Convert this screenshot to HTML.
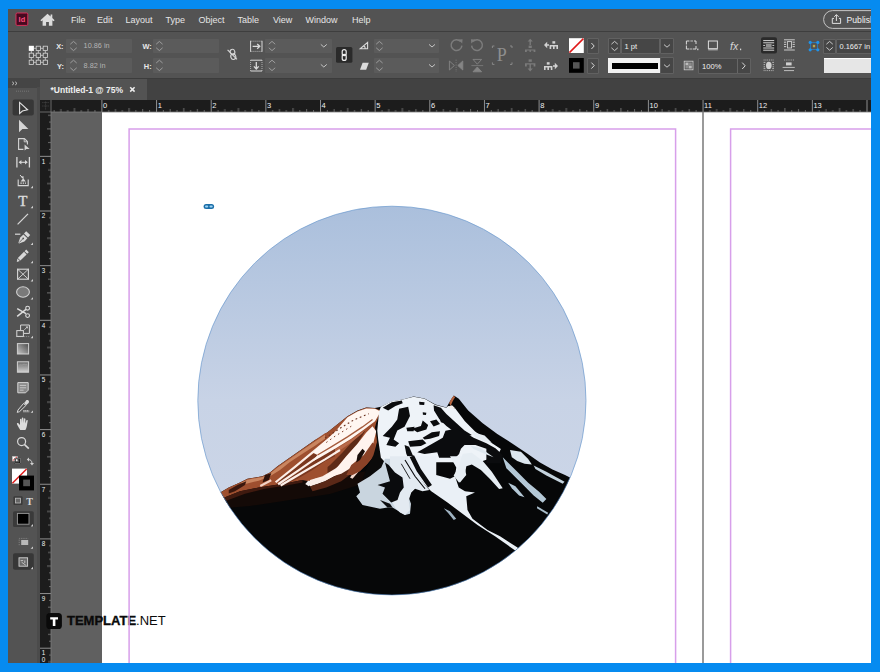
<!DOCTYPE html>
<html lang="en">
<head>
<meta charset="utf-8">
<title>Untitled-1 @ 75% - InDesign</title>
<style>
html,body{margin:0;padding:0;}
body{width:880px;height:672px;overflow:hidden;background:#068bf0;font-family:"Liberation Sans",sans-serif;position:relative;}
#app{position:absolute;left:8px;top:9px;width:863px;height:654px;background:#535353;overflow:hidden;}
.abs{position:absolute;}
#menubar{left:0;top:0;width:863px;height:22px;background:#535353;}
#menusep{left:0;top:22px;width:863px;height:1px;background:#3e3e3e;}
#control{left:0;top:23px;width:863px;height:46px;background:#535353;}
#tabbar{left:0;top:69px;width:863px;height:22px;background:#424242;}
#tab{left:32px;top:70px;width:107px;height:21px;background:#535353;}
#toolhead{left:0;top:69px;width:32px;height:10px;background:#454545;}
#tools{left:0;top:79px;width:29px;height:576px;background:#535353;}
#toolsep{left:29px;top:78px;width:3px;height:576px;background:#4b4b4b;}
#hruler{left:32px;top:91px;width:831px;height:12px;background:#1c1c1c;}
#vruler{left:32px;top:103px;width:11px;height:551px;background:#1c1c1c;}
#paste{left:43px;top:103px;width:51px;height:551px;background:#606060;}
#page1{left:94px;top:103px;width:601px;height:551px;background:#fff;}
#page2{left:696px;top:103px;width:167px;height:551px;background:#fff;}
#pagesep{left:694.4px;top:103px;width:1.6px;height:551px;background:#9a9a9a;}
.menu{position:absolute;top:6.4px;font-size:9px;line-height:11px;color:#e6e6e6;white-space:nowrap;}
.lbl{position:absolute;font-size:7.4px;line-height:9px;color:#e8e8e8;font-weight:bold;white-space:nowrap;}
.val{position:absolute;font-size:7.3px;line-height:9px;color:#b4b4b4;white-space:nowrap;}
.valw{position:absolute;font-size:7.6px;line-height:9px;color:#f0f0f0;white-space:nowrap;}
.fld{position:absolute;background:#5b5b5b;border-radius:1px;}
.dfld{position:absolute;background:#464646;box-shadow:0 0 0 0.6px #6a6a6a;}
#tabtxt{left:42.5px;top:76px;font-size:8.5px;line-height:11px;font-weight:bold;color:#f0f0f0;white-space:nowrap;}
#wm{left:59px;top:603.6px;font-size:13px;line-height:16px;color:#0a0a0a;white-space:nowrap;}
#wm b{-webkit-text-stroke:0.35px #0a0a0a;}
#wm b{letter-spacing:0;}
#art{position:absolute;left:0;top:0;width:880px;height:672px;pointer-events:none;}
</style>
</head>
<body>
<div id="app">
  <div class="abs" id="menubar"></div>
  <div class="abs" id="menusep"></div>
  <div class="abs" id="control"></div>
  <div class="abs" id="tabbar"></div>
  <div class="abs" id="tab"></div>
  <div class="abs" style="left:0;top:68.6px;width:863px;height:1px;background:#3c3c3c"></div>
  <div class="abs" id="toolhead"></div>
  <div class="abs" id="tools"></div>
  <div class="abs" id="toolsep"></div>
  <div class="abs" id="hruler"></div>
  <div class="abs" id="vruler"></div>
  <div class="abs" id="paste"></div>
  <div class="abs" id="page1"></div>
  <div class="abs" id="page2"></div>
  <div class="abs" id="pagesep"></div>

  <!-- menu -->
  <span class="menu" style="left:63px">File</span>
  <span class="menu" style="left:89px">Edit</span>
  <span class="menu" style="left:117.4px">Layout</span>
  <span class="menu" style="left:157.4px">Type</span>
  <span class="menu" style="left:190.4px">Object</span>
  <span class="menu" style="left:229.4px">Table</span>
  <span class="menu" style="left:265px">View</span>
  <span class="menu" style="left:297.4px">Window</span>
  <span class="menu" style="left:344px">Help</span>
  <span class="menu" style="left:838.6px;color:#f2f2f2;font-size:8.6px">Publish</span>

  <!-- control panel fields -->
  <div class="fld" style="left:58px;top:30.4px;width:66px;height:13.6px"></div>
  <div class="fld" style="left:58px;top:48.6px;width:66px;height:15.4px"></div>
  <div class="fld" style="left:145px;top:30.4px;width:65.6px;height:13.6px"></div>
  <div class="fld" style="left:145px;top:48.6px;width:65.6px;height:15.4px"></div>
  <div class="fld" style="left:257px;top:30.4px;width:67px;height:13.6px"></div>
  <div class="fld" style="left:257px;top:48.6px;width:67px;height:15.4px"></div>
  <div class="fld" style="left:365.6px;top:30.4px;width:65.8px;height:13.6px"></div>
  <div class="fld" style="left:365.6px;top:48.6px;width:65.8px;height:15.4px"></div>

  <span class="lbl" style="left:48.2px;top:32.6px">X:</span>
  <span class="lbl" style="left:49px;top:52.6px">Y:</span>
  <span class="lbl" style="left:134.4px;top:32.6px">W:</span>
  <span class="lbl" style="left:135.8px;top:52.6px">H:</span>
  <span class="val" style="left:75.6px;top:32.4px">10.86 in</span>
  <span class="val" style="left:75.6px;top:52.4px">8.82 in</span>

  <!-- stroke weight -->
  <div class="dfld" style="left:601px;top:30px;width:11px;height:14px"></div>
  <div class="dfld" style="left:614.4px;top:30px;width:36.2px;height:14px"></div>
  <div class="dfld" style="left:653px;top:30px;width:12px;height:14px"></div>
  <span class="valw" style="left:616.4px;top:32.6px">1 pt</span>
  <div class="abs" style="left:600px;top:49px;width:52px;height:15px;background:#f2f2f2"></div>
  <div class="abs" style="left:603.6px;top:53.8px;width:46px;height:5.8px;background:#000"></div>
  <div class="dfld" style="left:653px;top:49.4px;width:12px;height:14.4px"></div>
  <!-- opacity -->
  <div class="dfld" style="left:691px;top:49.6px;width:38px;height:14.2px"></div>
  <div class="dfld" style="left:729.6px;top:49.6px;width:12.4px;height:14.2px"></div>
  <span class="valw" style="left:694px;top:52.6px">100%</span>
  <!-- swatch buttons -->
  <div class="dfld" style="left:579.6px;top:30px;width:10.4px;height:14px;background:#4a4a4a"></div>
  <div class="dfld" style="left:579.6px;top:49.6px;width:10.4px;height:14px;background:#4a4a4a"></div>
  <!-- far right -->
  <div class="dfld" style="left:816px;top:30.6px;width:11.4px;height:13px"></div>
  <div class="dfld" style="left:829px;top:30.6px;width:36px;height:13px"></div>
  <span class="valw" style="left:831.6px;top:32.6px;font-size:7.4px">0.1667 in</span>
  <div class="abs" style="left:815.6px;top:49px;width:50px;height:15px;background:#e6e6e6;border-top:1px solid #fff;box-sizing:border-box"></div>

  <span class="abs" id="tabtxt">*Untitled-1 @ 75%</span>
  <span class="abs" id="wm"><b>TEMPLATE</b>.NET</span>
</div>

<svg id="art" width="880" height="672" viewBox="0 0 880 672">
<defs>
  <linearGradient id="sky" x1="0" y1="0" x2="0" y2="1">
    <stop offset="0" stop-color="#aabfdc"/>
    <stop offset="0.25" stop-color="#b9c9e1"/>
    <stop offset="0.5" stop-color="#c8d3e6"/>
    <stop offset="1" stop-color="#cfd8e8"/>
  </linearGradient>
  <clipPath id="appclip"><rect x="8" y="9" width="863" height="654"/></clipPath>
  <clipPath id="circ"><ellipse cx="391.9" cy="400.6" rx="194.1" ry="194.4"/></clipPath>
  <pattern id="hticks" patternUnits="userSpaceOnUse" x="101.4" y="100" width="54.65" height="12">
    <rect x="0" y="0" width="1" height="12" fill="#8e8e8e"/>
    <rect x="6.84" y="10" width="0.8" height="2" fill="#7c7c7c"/>
    <rect x="13.67" y="9" width="0.8" height="3" fill="#7c7c7c"/>
    <rect x="20.5" y="10" width="0.8" height="2" fill="#7c7c7c"/>
    <rect x="27.34" y="8" width="0.8" height="4" fill="#868686"/>
    <rect x="34.17" y="10" width="0.8" height="2" fill="#7c7c7c"/>
    <rect x="41" y="9" width="0.8" height="3" fill="#7c7c7c"/>
    <rect x="47.85" y="10" width="0.8" height="2" fill="#7c7c7c"/>
  </pattern>
  <pattern id="vticks" patternUnits="userSpaceOnUse" x="40" y="101.2" width="11" height="54.65">
    <rect x="0" y="0" width="11" height="1" fill="#8e8e8e"/>
    <rect x="9" y="6.84" width="2" height="0.8" fill="#7c7c7c"/>
    <rect x="8" y="13.67" width="3" height="0.8" fill="#7c7c7c"/>
    <rect x="9" y="20.5" width="2" height="0.8" fill="#7c7c7c"/>
    <rect x="7" y="27.34" width="4" height="0.8" fill="#868686"/>
    <rect x="9" y="34.17" width="2" height="0.8" fill="#7c7c7c"/>
    <rect x="8" y="41" width="3" height="0.8" fill="#7c7c7c"/>
    <rect x="9" y="47.85" width="2" height="0.8" fill="#7c7c7c"/>
  </pattern>
</defs>

<!-- rulers -->
<g id="rulers">
  <rect x="51" y="100" width="820" height="12" fill="url(#hticks)"/>
  <rect x="40" y="112" width="11" height="551" fill="url(#vticks)"/>
  <rect x="40" y="111.6" width="831" height="0.8" fill="#7d7d7d"/>
  <rect x="50.6" y="100" width="0.8" height="563" fill="#7d7d7d"/>
  <g font-family="Liberation Sans, sans-serif" font-size="7.5" fill="#efefef">
    <text x="103.0" y="107.6">0</text><text x="157.7" y="107.6">1</text><text x="212.3" y="107.6">2</text><text x="267.0" y="107.6">3</text><text x="321.6" y="107.6">4</text><text x="376.2" y="107.6">5</text><text x="430.9" y="107.6">6</text><text x="485.6" y="107.6">7</text><text x="540.2" y="107.6">8</text><text x="594.9" y="107.6">9</text><text x="649.5" y="107.6">10</text><text x="704.1" y="107.6">11</text><text x="758.8" y="107.6">12</text><text x="813.4" y="107.6">13</text>
  </g>
  <g font-family="Liberation Sans, sans-serif" font-size="7" fill="#efefef">
    <text transform="translate(41.8,163.8) scale(0.9,1)">1</text><text transform="translate(41.8,218.4) scale(0.9,1)">2</text><text transform="translate(41.8,273.0) scale(0.9,1)">3</text><text transform="translate(41.8,327.7) scale(0.9,1)">4</text><text transform="translate(41.8,382.3) scale(0.9,1)">5</text><text transform="translate(41.8,437.0) scale(0.9,1)">6</text><text transform="translate(41.8,491.6) scale(0.9,1)">7</text><text transform="translate(41.8,546.3) scale(0.9,1)">8</text><text transform="translate(41.8,600.9) scale(0.9,1)">9</text><text transform="translate(41.8,655.4) scale(0.9,1)">1</text><text transform="translate(41.8,661.6) scale(0.9,1)">0</text>
  </g>
</g>

<!-- page margins -->
<g id="margins" fill="none" stroke="#d79fea" stroke-width="1.5">
  <path d="M129.1 663V129.1H675.6V663"/>
  <path d="M730.6 663V129.1H871"/>
</g>

<!-- artwork -->
<g id="artwork">
  <g clip-path="url(#circ)">
    <rect x="195" y="203" width="395" height="395" fill="url(#sky)"/>
    <g id="mountain">
  <!-- base silhouette -->
  <path fill="#060708" d="M190 600V494L221 491.9L228.8 487.5L240 482.5L247.5 478.8L262.5 476.3L270 472.5L277.5 466.3L290 457.5L302.5 448.8L315 440L322.5 436.3L335 426.3L347.5 416.3L357.5 410.6L366.3 407.5L375 408L380.9 406.8L391.8 401.4L402.7 399.5L413.6 396.6L424.5 398.4L435.5 404.6L446.4 407.5L450 401.3L453.8 395.6L458.8 398.8L468.2 410.5L482.7 423.2L497.3 434.1L511.8 443.2L527.5 453.8L540 462.5L552.5 469.4L565 475L570 477.5L600 480V600Z"/>
  <!-- warm dark tint on lower-left -->
  <path fill="#140a07" d="M215 496L240 490L275 485L302 480L325 481L352 474L372 470L362 484L330 494L290 500L250 506L226 508Z"/>
  <!-- tile B (brown base): origin 310,390 scale 8 -->
  <g transform="translate(310,390) scale(0.125)">
    <path fill="#9e4f2f" d="M-10 450L100 370L200 290L300 210L380 165L450 140L520 145L570 165L530 260L520 300L540 400L520 520L450 600L340 680L-10 680Z"/>
    <path fill="#5e2a17" d="M440 330L380 430L290 530L200 640L140 680L60 680L160 600L260 500L350 400L420 330Z"/>
    <path fill="#b8694a" d="M-10 600L80 545L200 475L330 395L440 315L420 345L330 420L200 510L80 590L-10 640Z"/>
  </g>
  <!-- tile A: origin 215,420 scale 8 -->
  <g transform="translate(215,420) scale(0.125)">
    <path fill="#9e4f2f" d="M30 590L50 575L110 540L200 500L260 470L380 450L440 420L500 370L600 300L700 230L800 160L880 105L900 100V480L800 500L700 480L600 500L480 520L350 540L200 570L60 625Z"/>
    <path fill="#c98560" d="M200 505L260 478L380 455L440 428L500 380L600 310L700 240L800 172L880 118V150L800 205L700 270L600 335L520 400L440 450L350 485L250 510Z"/>
    <path fill="#7a371f" d="M520 470L620 400L760 290L880 200L960 150V290L880 330L780 400L660 470L560 515L500 520Z"/>
    <path fill="#3a170d" d="M110 560L180 520L250 490L240 520L160 570L110 588Z"/>
    <path fill="#2e120a" d="M400 440L450 425L430 480L380 500Z"/>
    <path fill="#401a0f" d="M60 625L200 570L350 540L480 520L600 500L700 480L700 500L560 525L400 550L240 590L90 645Z"/>
    <g fill="none" stroke="#fbeee8" stroke-width="17">
      <path d="M485 498L640 375L870 185L990 95"/>
      <path d="M505 514L680 395L880 255L1000 170"/>
      <path d="M525 524L700 420L880 315L1000 240"/>
    </g>
    <path fill="none" stroke="#f2d3c6" stroke-width="16" d="M362 528L450 482"/>
    <path fill="#f5f1f0" d="M722 512L745 485L790 488L800 470L845 468L862 490L820 512L770 516L750 530Z"/>
  </g>
  <!-- tile C: origin 310,460 scale 8 (continuations) -->
  <g transform="translate(310,460) scale(0.125)">
    <path fill="#fbeee8" d="M0 160L100 130L200 70L300 0L370 0L250 100L120 170L0 212Z"/>
    <path fill="#f3d9cf" d="M320 140L390 40L430 0L470 0L400 80L340 150Z"/>
    <path fill="#5a2817" d="M0 212L120 170L250 100L330 30L330 110L250 170L130 220L20 250Z"/>
  </g>
  <!-- tile B (snow): origin 310,390 scale 8 -->
  <g transform="translate(310,390) scale(0.125)">
    <path fill="#fff6f1" d="M300 217L380 172L450 147L520 150L565 172L520 250L440 310L330 390L200 470L80 540L20 572L60 520L20 500L100 425L200 333Z"/>
    <path fill="#fff3ee" d="M500 290L530 330L505 430L440 530L350 610L250 670L150 700L120 690L200 640L290 530L380 430L450 340Z"/>
    <path fill="#8a4228" d="M500 420L522 440L512 520L450 600L400 650L340 680L290 680L330 600L430 520Z"/>
    <path fill="#1a0d0a" d="M420 470L440 490L400 560L370 580L380 520Z"/>
    <path fill="none" stroke="#a55a3b" stroke-width="10" d="M60 520L170 455L300 375L420 295L500 235"/>
    <path fill="none" stroke="#6a3220" stroke-width="9" stroke-dasharray="14 22" d="M120 385L250 300L350 240L470 190"/>
    <path fill="none" stroke="#7a3a24" stroke-width="8" stroke-dasharray="12 26" d="M130 420L200 370L330 290"/>
  </g>
  <!-- dark wedge between sunlit and shaded -->
  <path fill="#0b0a0a" d="M375.6 426L378 430L378.5 440L381.3 452.5L385 463L381 470L372 476L362 480L366 470L373.5 455L377 442Z"/>

  <!-- upper snowfield view: origin 370,385 scale 5.5 -->
  <g transform="translate(370,385) scale(0.181818)">
    <path fill="#eef3f8" d="M50 145L60 120L120 90L180 80L240 65L300 75L360 110L420 125L430 115L470 130L522 200L578 256L646 304L720 352L700 390L600 425L520 425L470 425L300 425L83 425L60 400L45 300L40 250Z"/>
    <g fill="#0b0c0e">
      <path d="M70 125L120 95L175 85L180 100L140 115L100 140Z"/>
      <path d="M160 130L210 120L220 170L190 230L150 250L130 300L160 320L140 340L90 330L110 290L70 280L120 230L150 190Z"/>
      <path d="M270 92L300 95L298 110L272 108Z"/>
      <path d="M200 235L245 230L240 255L205 255Z"/>
      <path d="M230 240L280 225L290 195L320 220L310 245L260 260Z"/>
      <path d="M290 150L310 152L308 165L291 163Z"/>
      <path d="M330 200L365 190L385 215L350 228Z"/>
      <path d="M375 165L410 160L440 195L420 215L390 205Z"/>
      <path d="M350 112L390 125L420 160L470 205L520 250L560 275L530 285L470 262L420 225L380 185L352 140Z"/>
      <path d="M290 290L340 260L385 255L380 280L330 295L300 300Z"/>
      <path d="M210 310L290 300L310 320L280 335L220 340Z"/>
      <path d="M260 370L330 330L400 290L415 252L470 240L520 260L570 290L640 320L690 348L730 385L720 430L640 430L640 350L580 330L520 330L500 350L490 380L470 400L380 400L370 370L300 380Z"/>
      <path d="M380 400L470 400L480 440L300 440Z" opacity="0"/>
      <path d="M190 330L215 340L250 420L253 430L225 430L200 380Z"/>
      <path d="M20 250L42 300L62 400L85 430L0 430L0 400L20 380L10 300Z" opacity="0"/>
    </g>
  </g>
  <!-- ridge (dark) right of pinnacle: keep base. pinnacle warm highlight -->
  <path fill="#b4633f" d="M449.2 403L451.5 398.6L453.6 395.8L455.2 397L452.8 401L450.6 406Z"/>
  <path fill="#f4efec" d="M447.5 406.8L452 405.2L455.5 408.6L450 408.6Z"/>

  <!-- tile D: origin 310,460 scale 8 : lower-left snow patch -->
  <g transform="translate(310,460) scale(0.125)">
    <path fill="#c9d5df" d="M600 -10L570 60L480 130L380 190L400 260L370 290L420 360L560 390L620 380L660 380L760 440L800 430L808 350L790 300L810 250L780 200L720 100L690 -10Z"/>
  </g>
  <!-- tile E: origin 400,460 scale 8 : chute etc -->
  <g transform="translate(400,460) scale(0.125)">
    <path fill="#e3eaf1" d="M-80 -30L70 -30L110 60L200 200L235 240L180 250L120 230L90 260L70 320L80 400L40 440L0 420L-40 380L-80 300Z"/>
    <path fill="#eaf0f6" d="M60 -30L130 -30L290 -30L290 120L400 150L440 130L470 220L520 250L600 260L530 290L540 400L580 470L700 560L800 610L940 700L960 730L930 730L760 610L620 520L500 430L380 340L250 250L200 200L100 60Z"/>
    <path fill="#eaf0f6" d="M400 -30L500 -30L530 120L480 180L440 130L450 60Z"/>
    <g fill="none" stroke="#0a0b0d">
      <path stroke-width="38" d="M95 -30L150 80L240 210"/>
      <path stroke-width="9" d="M40 0L120 130L200 230"/>
      <path stroke-width="7" d="M10 30L80 150"/>
    </g>
    <path fill="#9fb3c2" d="M350 385L400 410L450 470L430 480L390 430Z"/>
  </g>
  <g transform="translate(310,460) scale(0.125)">
    <path fill="#0a0b0d" d="M600 20L640 170L540 200L600 220L580 270L650 340L700 320L720 260L750 220L740 140L680 100L630 40Z"/>
    <path fill="#0a0b0d" d="M560 320L640 350L660 380L620 380Z"/>
  </g>
  <!-- right view: origin 430,430 scale 5.5 -->
  <g transform="translate(430,430) scale(0.181818)">
    <path fill="#e6edf3" d="M180 130L230 125L290 170L340 230L400 320L380 325L330 270L280 220L230 190L200 200L190 250L160 290L130 250L160 200L170 160Z"/>
    <path fill="#e6edf3" d="M230 10L300 30L340 70L300 60L250 40Z"/>
    <path fill="#dfe8ef" d="M220 85L280 100L350 150L300 130L240 105Z"/>
    <path fill="#dce6ee" d="M440 110L500 120L540 160L560 190L520 185L480 170L450 150Z"/>
    <path fill="#b4c8d6" d="M400 150L430 180L480 230L540 290L600 340L640 380L620 400L570 360L520 310L470 260L420 210Z"/>
    <path fill="#c4d3de" d="M570 195L640 230L740 285L730 295L640 250L580 215Z"/>
    <path fill="#b4c8d6" d="M430 290L470 310L520 370L490 360L450 320Z"/>
    <path fill="#a9bdcb" d="M590 420L650 455L645 465L588 430Z"/>
    <path fill="#dfe8ef" d="M0 40L60 20L120 40L180 60L150 80L90 70L40 70L0 80Z" opacity="0"/>
  </g>
</g>
  </g>
  <ellipse cx="391.9" cy="400.6" rx="194.1" ry="194.4" fill="none" stroke="#5b8fc9" stroke-width="0.6"/>
  <rect x="203.6" y="204.1" width="10.5" height="5" rx="2.5" fill="#1b6ea8"/>
  <rect x="205" y="205.6" width="3.2" height="2" rx="1" fill="#9fd4f5"/><rect x="209.5" y="205.6" width="3.2" height="2" rx="1" fill="#9fd4f5"/>
</g>

<!-- watermark logo -->
<g id="wmlogo">
  <rect x="46.3" y="613" width="15.6" height="16" rx="3.6" fill="#0a0a0a"/>
  <path d="M50.2 617.2h7.8v2.3h-2.6v6.4h-2.6v-6.4h-2.6z" fill="#fff"/>
</g>

<g id="topicons" clip-path="url(#appclip)">
  <!-- Id logo -->
  <rect x="16" y="13" width="11.8" height="12.4" rx="1.2" fill="#470a20" stroke="#e6305f" stroke-width="0.9"/>
  <text x="21.9" y="22.4" text-anchor="middle" font-family="Liberation Sans, sans-serif" font-weight="bold" font-size="7.4" fill="#ff4f80">Id</text>
  <!-- home -->
  <path fill="#dcdcdc" d="M47.5 13.7L40.4 20.2L41.5 21.3L42.6 20.3V25.7H46.1V21.9H48.9V25.7H52.4V20.3L53.5 21.3L54.6 20.2L52.3 18.1V14.6H50.6V16.5Z"/>
  <!-- publish pill -->
  <rect x="823.6" y="10.6" width="62" height="17.8" rx="8.9" fill="none" stroke="#c4c4c4" stroke-width="1"/>
  <g fill="none" stroke="#e0e0e0" stroke-width="1">
    <path d="M834 18.4H832.3V23.4H840.6V18.4H838.9"/>
    <path d="M836.4 21V14.8M834.2 16.8L836.4 14.6L838.6 16.8"/>
  </g>
  <!-- reference point grid -->
  <g fill="none" stroke="#d6d6d6" stroke-width="0.8">
    <path d="M33.7 48.3H36M40.7 48.3H43M33.7 55.3H36M40.7 55.3H43M33.7 62.3H36M40.7 62.3H43M31.3 50.7V53M31.3 57.7V60M38.3 50.7V53M38.3 57.7V60M45.3 50.7V53M45.3 57.7V60"/>
    <rect x="36.2" y="46.2" width="4.3" height="4.3"/><rect x="43.2" y="46.2" width="4.3" height="4.3"/>
    <rect x="29.2" y="53.2" width="4.3" height="4.3"/><rect x="36.2" y="53.2" width="4.3" height="4.3"/><rect x="43.2" y="53.2" width="4.3" height="4.3"/>
    <rect x="29.2" y="60.2" width="4.3" height="4.3"/><rect x="36.2" y="60.2" width="4.3" height="4.3"/><rect x="43.2" y="60.2" width="4.3" height="4.3"/>
  </g>
  <rect x="28.8" y="45.8" width="5.1" height="5.1" fill="#fff"/>
  <!-- spinner chevrons (dim) -->
  <g fill="none" stroke="#a4a4a4" stroke-width="0.9">
    <path d="M70.3 44.2L73.5 41.4L76.7 44.2M70.3 47.8L73.5 50.6L76.7 47.8M70.3 63L73.5 60.2L76.7 63M70.3 67.8L73.5 70.6L76.7 67.8"/>
    <path d="M156.2 44.2L159.4 41.4L162.6 44.2M156.2 47.8L159.4 50.6L162.6 47.8M156.2 63L159.4 60.2L162.6 63M156.2 67.8L159.4 70.6L162.6 67.8"/>
    <path d="M268.8 44.2L272 41.4L275.2 44.2M268.8 47.8L272 50.6L275.2 47.8M268.8 63L272 60.2L275.2 63M268.8 67.8L272 70.6L275.2 67.8"/>
    <path d="M376.2 44.2L379.4 41.4L382.6 44.2M376.2 47.8L379.4 50.6L382.6 47.8M376.2 63L379.4 60.2L382.6 63M376.2 67.8L379.4 70.6L382.6 67.8"/>
  </g>
  <!-- dropdown chevrons -->
  <g fill="none" stroke="#cfcfcf" stroke-width="0.9">
    <path d="M320.8 44.4L323.8 47L326.8 44.4M320.8 64.4L323.8 67L326.8 64.4"/>
    <path d="M429 44.4L432 47L435 44.4M429 64.4L432 67L435 64.4"/>
  </g>
  <!-- broken chain -->
  <g fill="none" stroke="#d8d8d8" stroke-width="1.1">
    <ellipse cx="232.5" cy="51.9" rx="2.3" ry="2.6" transform="rotate(-20 232.5 51.9)"/>
    <ellipse cx="233.3" cy="56.7" rx="2.5" ry="2.8" transform="rotate(-20 233.3 56.7)"/>
    <path d="M227.6 49.8L237 59.4"/>
  </g>
  <!-- scale X / Y icons -->
  <g fill="none" stroke="#dadada" stroke-width="1">
    <path d="M250.6 40.8V51.8M262 40.8V51.8" />
    <path d="M250.6 41.2H262M250.6 51.4H262" stroke-dasharray="1 1" stroke-width="0.7"/>
    <path d="M252.6 46.3H259.4M257.2 43.9L259.8 46.3L257.2 48.7" stroke-width="1.3"/>
    <path d="M250.6 60V71M262 60V71" stroke-dasharray="1 1" stroke-width="0.7"/>
    <path d="M250.6 60.2H262M250.6 71H262"/>
    <path d="M256.3 62V68.6M253.9 66.4L256.3 69L258.7 66.4" stroke-width="1.3"/>
  </g>
  <!-- constrain link button -->
  <rect x="336" y="47" width="16.4" height="15.8" rx="1.6" fill="#2a2a2a"/>
  <g fill="none" stroke="#ececec" stroke-width="1.2">
    <rect x="342.2" y="49.6" width="4" height="6" rx="2"/>
    <rect x="342.2" y="54.4" width="4" height="6" rx="2"/>
  </g>
  <!-- rotation angle / shear -->
  <path fill="none" stroke="#dcdcdc" stroke-width="1.1" d="M367.6 42.4L360.2 48.8H367.6ZM364 45.6C364.8 46.4 365.2 47.4 365.2 48.6"/>
  <path fill="#dcdcdc" d="M362.6 62.8H368.8L366.2 69.8H360Z"/>
  <!-- rotate cw / ccw (dim) -->
  <g fill="none" stroke="#7c7c7c" stroke-width="1.5">
    <path d="M460.6 41.6A5.4 5.4 0 1 0 461.9 45.6"/>
    <path d="M472.9 41.6A5.4 5.4 0 1 1 471.6 45.6"/>
  </g>
  <path fill="#7c7c7c" d="M458.2 39.4L462.6 39.2L462.2 43.6ZM475.3 39.4L470.9 39.2L471.3 43.6Z"/>
  <!-- flip h / flip v (dim) -->
  <g stroke="#858585" stroke-width="0.9">
    <path fill="none" d="M449.4 61V70L454.4 65.5Z"/>
    <path fill="#858585" d="M462.8 61V70L457.8 65.5Z"/>
    <path fill="none" d="M456.1 59.6V72" stroke-dasharray="1.2 1.2" stroke-width="0.7"/>
    <path fill="none" d="M473 59.4H481.6L477.3 64.2Z"/>
    <path fill="#858585" d="M473 71.8H481.6L477.3 67Z"/>
    <path fill="none" d="M471.4 65.6H483.2" stroke-width="0.7"/>
  </g>
  <!-- P icon -->
  <text x="501.8" y="60.7" text-anchor="middle" font-family="Liberation Serif, serif" font-size="18" fill="#8e8e8e">P</text>
  <g fill="none" stroke="#8e8e8e" stroke-width="0.9">
    <path d="M492.4 48V46H494.4M510 46H512V48M492.4 62.4V64.4H494.4M510 64.4H512V62.4"/>
  </g>
  <!-- select container / content (dim) -->
  <g fill="#7b7b7b">
    <path d="M530.2 38.8L527.6 41.6H529.5V45H530.9V41.6H532.8Z"/>
    <rect x="528.6" y="45.6" width="3.2" height="2.4"/>
    <path d="M525 52V49.4H535.4V52H533.6V50.6H530.9V52H529.5V50.6H526.8V52Z"/>
    <rect x="528.6" y="59.4" width="3.2" height="2.4"/>
    <path d="M525 66.4V63.2H535.4V66.4H533.6V64.6H530.9V68.4H532.8L530.2 71.6L527.6 68.4H529.5V64.6H526.8V66.4Z"/>
  </g>
  <!-- select previous / next object -->
  <g fill="#d2d2d2">
    <path d="M544 45L547.2 41.8V44.2H549V45.8H547.2V48.2Z"/>
    <rect x="552.4" y="41.2" width="2.8" height="2.4"/>
    <path d="M549.6 49V45H558V49H556.4V46.4H554.6V49H553V46.4H551.2V49Z"/>
    <path d="M558 66L554.8 62.8V65.2H553V66.8H554.8V69.2Z"/>
    <rect x="546.8" y="62.2" width="2.8" height="2.4"/>
    <path d="M544 70V66H552.4V70H550.8V67.4H549V70H547.4V67.4H545.6V70Z"/>
  </g>
  <!-- fill / stroke swatches -->
  <rect x="569" y="38.2" width="14.8" height="14.8" fill="#fff"/>
  <path d="M569.4 52.6L583.4 38.6" stroke="#e01919" stroke-width="1.5" fill="none"/>
  <rect x="569" y="58" width="14.8" height="14.8" fill="#000"/>
  <rect x="573" y="62.2" width="6.6" height="6.4" fill="#555"/>
  <g fill="none" stroke="#d8d8d8" stroke-width="1">
    <path d="M591.4 43L594.2 46L591.4 49M591.4 62.6L594.2 65.6L591.4 68.6"/>
    <path d="M742.2 62.6L745.2 65.8L742.2 69"/>
  </g>
  <!-- stroke weight chevrons -->
  <g fill="none" stroke="#d6d6d6" stroke-width="0.9">
    <path d="M611.4 44.2L614.6 41.4L617.8 44.2M611.4 47.8L614.6 50.6L617.8 47.8"/>
    <path d="M664 44.6L667 47.2L670 44.6M664 64.6L667 67.2L670 64.6"/>
    <path d="M826.4 44.2L829.6 41.4L832.8 44.2M826.4 47.4L829.6 50.2L832.8 47.4"/>
  </g>
  <!-- corner options -->
  <g fill="none" stroke="#dadada" stroke-width="1">
    <path d="M686.4 44V41H689.4M694 41H696V44M696 46V49H693M689.4 49H686.4V46" />
    <path d="M690.4 41H693M686.4 44.4V45.6M690 49H692.4" stroke-width="0.8"/>
  </g>
  <rect x="697.2" y="48.6" width="1.2" height="1.6" fill="#dadada"/>
  <!-- opacity checker -->
  <g>
    <rect x="684.2" y="61.2" width="8.8" height="8.6" fill="none" stroke="#d0d0d0" stroke-width="0.8"/>
    <path fill="#cfcfcf" d="M685.4 62.4H688.6V65.5H685.4ZM688.6 65.5H691.8V68.6H688.6Z" opacity="0.85"/>
    <path fill="#8a8a8a" d="M688.6 62.4H691.8V65.5H688.6ZM685.4 65.5H688.6V68.6H685.4Z"/>
  </g>
  <!-- drop shadow -->
  <rect x="708.4" y="41" width="9" height="7.6" fill="none" stroke="#dcdcdc" stroke-width="1"/>
  <path d="M708.2 49.6H717.8" stroke="#a8a8a8" stroke-width="1.6"/>
  <!-- fx -->
  <text x="730" y="49.6" font-family="Liberation Sans, sans-serif" font-style="italic" font-size="10.5" fill="#d6d6d6">fx</text>
  <rect x="740" y="48.6" width="1.2" height="1.6" fill="#d6d6d6"/>
  <!-- text wrap icons -->
  <rect x="761" y="37.2" width="16" height="16.2" rx="2" fill="#2a2a2a"/>
  <g stroke="#e8e8e8" stroke-width="0.9" fill="none">
    <path d="M763.2 40.6H774.2M763.2 42.8H774.2M763.2 48H774.2M763.2 50.2H774.2M763.2 45.4H765M772.4 45.4H774.2"/>
  </g>
  <rect x="765.8" y="43.8" width="5.8" height="3.2" fill="#8f8f8f"/>
  <g stroke="#d8d8d8" stroke-width="0.9" fill="none">
    <path d="M784 39.8H794.8M784 50H794.8M784 42.2H786.2M784 44.4H786.2M784 46.6H786.2M792.6 42.2H794.8M792.6 44.4H794.8M792.6 46.6H794.8"/>
    <rect x="787.4" y="41.6" width="4.2" height="6.4" stroke-width="0.8"/>
  </g>
  <g stroke="#c8c8c8" stroke-width="0.8" fill="none">
    <path d="M763.6 60H774M763.6 70.6H774" stroke-dasharray="1 0.8"/>
    <path d="M763.6 62.4H765.4M763.6 64.6H765M763.6 66.8H765M763.6 68.6H765.4M772.2 62.4H774M772.6 64.6H774M772.6 66.8H774M772.2 68.6H774"/>
  </g>
  <ellipse cx="768.8" cy="65.4" rx="2.8" ry="3.6" fill="#cfcfcf"/>
  <g stroke="#c8c8c8" stroke-width="0.9" fill="none">
    <path d="M784 60H794" stroke-dasharray="1 0.8" stroke-width="0.7"/>
    <path d="M782.6 67.4H794.8M784 70.6H794" />
  </g>
  <rect x="786" y="62.4" width="5.6" height="3" fill="#cfcfcf"/>
  <!-- blue corner icon -->
  <g>
    <rect x="810.4" y="42.4" width="7.2" height="7.2" fill="none" stroke="#2a7fc4" stroke-width="0.8"/>
    <g fill="#1f93ea">
      <circle cx="810.2" cy="42.4" r="1.6"/><circle cx="817.8" cy="42.4" r="1.6"/><circle cx="810.2" cy="49.8" r="1.6"/><circle cx="817.8" cy="49.8" r="1.6"/>
    </g>
    <circle cx="814" cy="46.1" r="1.3" fill="#b9a64a"/>
  </g>
  <!-- tab close -->
  <path d="M130.2 87.2L134.6 91.6M134.6 87.2L130.2 91.6" stroke="#ececec" stroke-width="1.5" fill="none"/>
  <!-- toolbar header chevrons / grip -->
  <path d="M12.2 81.8L14 83.4L12.2 85M15.2 81.8L17 83.4L15.2 85" stroke="#d0d0d0" stroke-width="0.9" fill="none"/>
  <path d="M16 91.2H29.4" stroke="#6a6a6a" stroke-width="1.6" stroke-dasharray="1 1"/>
  <!-- ruler corner -->
  <path d="M42.4 102.6H49M42.4 106H49M45.6 101.6V110" stroke="#5a5a5a" stroke-width="0.7" stroke-dasharray="1 1" fill="none"/>
</g>
<g id="toolicons">
  <!-- selected tool bg -->
  <rect x="12.6" y="99.4" width="21.2" height="16.2" rx="2" fill="#373737"/>
  <!-- selection tool (outline arrow) -->
  <path d="M19.6 102.4V113.6L22.4 111L27.6 109.8Z" fill="none" stroke="#e4e4e4" stroke-width="1.1" stroke-linejoin="miter"/>
  <!-- direct selection (filled) -->
  <path d="M19 119.8V132.2L22.4 129H28.4Z" fill="#d4d4d4"/>
  <!-- page tool -->
  <g fill="none" stroke="#d4d4d4" stroke-width="1.1">
    <path d="M23.4 149.4H18.6V138.6H24.4L27.4 141.6V144.4"/>
    <path d="M24.2 138.8V141.8H27.2" stroke-width="0.9"/>
  </g>
  <path d="M24.6 144.6V150.6L26.4 149H29.6Z" fill="#d4d4d4"/>
  <!-- gap tool -->
  <g fill="none" stroke="#d8d8d8" stroke-width="1.3">
    <path d="M16.9 157V167.6M29.4 157V167.6"/>
    <path d="M19.6 162.3H26.8" stroke-width="1.1"/>
  </g>
  <path d="M18.6 162.3L21.4 160V164.6ZM27.8 162.3L25 160V164.6Z" fill="#d8d8d8"/>
  <!-- content collector -->
  <g fill="none" stroke="#d8d8d8" stroke-width="1.1">
    <path d="M18.2 179.4V185.6H28.2V179.4"/>
    <path d="M20.4 183.2H26" stroke-width="1.2" stroke-dasharray="1.4 0.9"/>
    <path d="M20 175L22.6 177.8" stroke-width="1"/>
  </g>
  <path d="M20.6 181.4H25.8L23.2 178.2Z" fill="#d8d8d8"/>
  <path d="M20.6 176.6L23.6 176.2L23.4 179.2Z" fill="#d8d8d8"/>
  <!-- type tool -->
  <text x="22.9" y="205.6" text-anchor="middle" font-family="Liberation Serif, serif" font-size="15" fill="#dcdcdc" stroke="#dcdcdc" stroke-width="0.4">T</text>
  <!-- line tool -->
  <path d="M17.6 224.4L28 213.8" stroke="#d8d8d8" stroke-width="1.2" fill="none"/>
  <!-- pen tool -->
  <g fill="#d8d8d8">
    <path d="M15 233.6H20.4V234.8H15Z"/>
    <path d="M26.2 231.2L30.2 235L28 237.6L24 233.6Z"/>
    <path d="M23.4 234.4L27.4 238.2L24.4 241.4L19 243.4L18.4 242.8L20.2 237.4Z"/>
  </g>
  <path d="M19.2 242.6L22.8 238.8" stroke="#535353" stroke-width="0.8"/>
  <circle cx="23.2" cy="238.4" r="0.9" fill="#535353"/>
  <!-- pencil -->
  <g fill="#d8d8d8">
    <path d="M26.2 249.6L28.8 252.2L27.2 253.8L24.6 251.2Z"/>
    <path d="M24 251.8L26.6 254.4L20.4 260.6L17.8 258Z"/>
    <path d="M17.4 258.6L19.8 261L16.8 262Z"/>
  </g>
  <!-- rectangle frame -->
  <g fill="none" stroke="#d8d8d8" stroke-width="1.1">
    <rect x="17.6" y="269.2" width="10.8" height="10"/>
    <path d="M17.6 269.2L28.4 279.2M28.4 269.2L17.6 279.2" stroke-width="0.9"/>
  </g>
  <!-- ellipse -->
  <ellipse cx="23" cy="292" rx="6.4" ry="5.2" fill="#7a7a7a" stroke="#d2d2d2" stroke-width="1.1"/>
  <!-- scissors -->
  <g fill="none" stroke="#dcdcdc">
    <path d="M17.2 308.6L26 313.6M17.2 316.4L26 309.4" stroke-width="1.5"/>
    <circle cx="27.6" cy="308.2" r="1.9" stroke-width="1.1"/>
    <circle cx="27.6" cy="315.6" r="1.9" stroke-width="1.1"/>
  </g>
  <!-- free transform -->
  <g fill="none" stroke="#d6d6d6" stroke-width="1">
    <rect x="16.8" y="330.6" width="6.6" height="5.8"/>
    <path d="M20.6 330V325H29.4V333.4H24"/>
    <path d="M24.4 329.8L27.4 326.8" stroke-width="0.9"/>
    <path d="M16.2 336.6H30" stroke-width="0.5" stroke-dasharray="1 1"/>
  </g>
  <path d="M25.6 326.6H27.8V328.8Z" fill="#d6d6d6"/>
  <!-- gradient swatch -->
  <defs>
    <linearGradient id="gsw" x1="0" y1="1" x2="1" y2="0"><stop offset="0" stop-color="#c8c8c8"/><stop offset="1" stop-color="#4a4a4a"/></linearGradient>
    <linearGradient id="gfe" x1="0" y1="1" x2="0" y2="0"><stop offset="0" stop-color="#cfcfcf"/><stop offset="1" stop-color="#6a6a6a"/></linearGradient>
  </defs>
  <rect x="17.4" y="343.6" width="11.2" height="10.4" fill="url(#gsw)" stroke="#d0d0d0" stroke-width="1"/>
  <!-- gradient feather -->
  <rect x="17.4" y="361.8" width="11.2" height="10.4" fill="url(#gfe)" stroke="#d0d0d0" stroke-width="1"/>
  <path d="M19 365.6C20.4 363.6 21.6 366.4 23 364.6C24.4 363 25.6 366 27 364.4" stroke="#9a9a9a" stroke-width="0.9" fill="none"/>
  <!-- note tool -->
  <path d="M17.8 382.6H28.2V390.2L25.6 392.8H17.8Z" fill="#8a8a8a" stroke="#d6d6d6" stroke-width="1"/>
  <path d="M19.8 385.4H26.2M19.8 387.8H26.2M19.8 390.2H23.6" stroke="#d6d6d6" stroke-width="0.8" fill="none"/>
  <!-- eyedropper -->
  <g fill="#dadada">
    <path d="M26 400.4C27.2 399.4 29 400 29 401.8C29 403 28 403.6 27.2 404.2L26.2 405.2L24 403L25 402Z"/>
    <path d="M23.6 403.4L25.8 405.6L19.6 411.6L17.2 412.4L18 410Z" fill="none" stroke="#dadada" stroke-width="1"/>
  </g>
  <path d="M23 410.2H29.4V412.4H23Z" fill="#8e8e8e"/>
  <path d="M23.4 410.8H24.4M25.2 410.8H26.2M27 410.8H28" stroke="#e6e6e6" stroke-width="0.8"/>
  <!-- hand -->
  <path fill="#dcdcdc" d="M20.2 430C19.2 428 17.6 425.6 17 424.2C16.6 423.2 17.8 422.6 18.6 423.4L20 425V419.4C20 418.4 21.4 418.4 21.5 419.4L21.8 423V418.2C21.9 417.2 23.3 417.2 23.4 418.2L23.5 423L24 418.8C24.1 417.9 25.4 418 25.4 419L25.3 423.4L26.4 420.4C26.7 419.6 27.9 419.9 27.7 420.9L26.8 426.2C26.6 427.8 26 429 25.4 430Z"/>
  <!-- zoom -->
  <circle cx="21.6" cy="441.6" r="4" fill="none" stroke="#dadada" stroke-width="1.2"/>
  <path d="M24.6 444.6L28.8 448.6" stroke="#dadada" stroke-width="1.6"/>
  <!-- default fill/stroke mini -->
  <rect x="12.4" y="456.4" width="5" height="4.6" fill="#fff" stroke="#bbb" stroke-width="0.5"/>
  <path d="M12.8 460.6L17 456.8" stroke="#e01919" stroke-width="0.9"/>
  <rect x="15.2" y="458.6" width="4.8" height="4.6" fill="none" stroke="#111" stroke-width="1.3"/>
  <rect x="15" y="458.4" width="5.2" height="5" fill="none" stroke="#d0d0d0" stroke-width="0.4"/>
  <!-- swap arrows -->
  <path d="M28.4 459.6C30.6 459.6 32 460.8 32 463.4" fill="none" stroke="#cfcfcf" stroke-width="1"/>
  <path d="M29 457.6L26.8 459.6L29 461.6ZM30 463L32 465.6L34 463Z" fill="#cfcfcf"/>
  <!-- fill / stroke big -->
  <rect x="12" y="468.6" width="15" height="15" fill="#fff"/>
  <path d="M12.4 483.2L26.6 469" stroke="#e01919" stroke-width="1.4"/>
  <rect x="19" y="475.6" width="15" height="14.8" fill="#000"/>
  <rect x="23.2" y="479.6" width="6.8" height="6.6" fill="#555"/>
  <!-- formatting affects -->
  <rect x="13.4" y="496.2" width="9.2" height="8.8" rx="1" fill="#3a3a3a"/>
  <rect x="15.4" y="498.2" width="5.2" height="4.8" fill="#666" stroke="#bdbdbd" stroke-width="0.8"/>
  <text x="29.6" y="504.6" text-anchor="middle" font-family="Liberation Serif, serif" font-weight="bold" font-size="10" fill="#d8d8d8">T</text>
  <!-- apply color -->
  <rect x="13" y="511.2" width="20.8" height="15.8" rx="1.6" fill="#3a3a3a"/>
  <rect x="17.4" y="513.4" width="11.6" height="10.8" fill="#000" stroke="#9a9a9a" stroke-width="0.9"/>
  <!-- view mode -->
  <g fill="none" stroke="#8c8c8c" stroke-width="0.8">
    <path d="M19.2 545.2V538.4H28.2" stroke-dasharray="1.2 1"/>
  </g>
  <rect x="21.2" y="540" width="7" height="5" fill="#b9b9b9"/>
  <!-- screen mode -->
  <rect x="13" y="553.2" width="20.8" height="16.6" rx="1.8" fill="#373737"/>
  <rect x="19" y="557.8" width="8.6" height="8.4" fill="#6a6a6a" stroke="#d4d4d4" stroke-width="0.9"/>
  <path d="M20.6 560.6H23.2M21.6 562.2L25.8 565.2M24.8 560.4V563" stroke="#d4d4d4" stroke-width="0.8" fill="none"/>
  <!-- corner triangles -->
  <g fill="#d0d0d0">
    <path d="M33 185.8V188.2H30.6Z"/><path d="M33 205.8V208.2H30.6Z"/><path d="M33 242.6V245H30.6Z"/>
    <path d="M33 260.8V263.2H30.6Z"/><path d="M33 279V281.4H30.6Z"/><path d="M33 297.2V299.6H30.6Z"/>
    <path d="M33 335.8V338.2H30.6Z"/><path d="M33 410.4V412.8H30.6Z"/><path d="M33 524V526.4H30.6Z"/>
    <path d="M33 546.4V548.8H30.6Z"/><path d="M33 566.8V569.2H30.6Z"/>
  </g>
</g>
</svg>
</body>
</html>
